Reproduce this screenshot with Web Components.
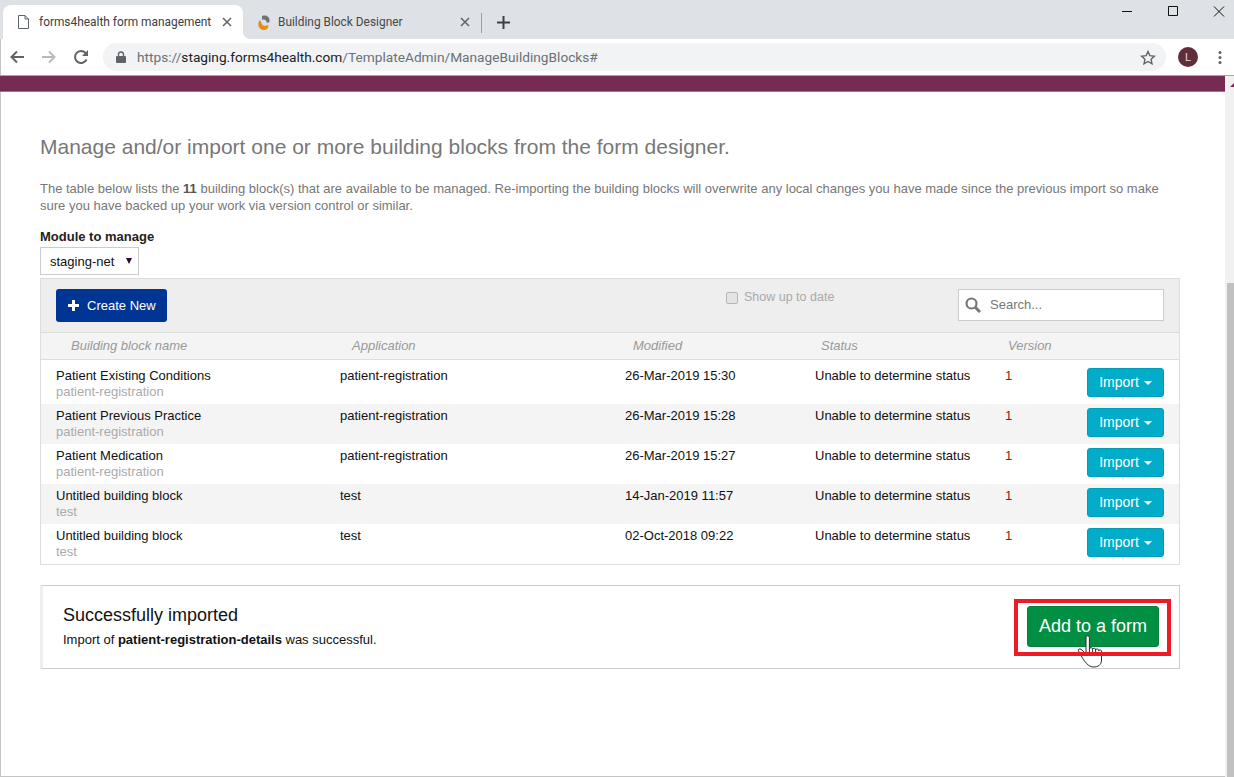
<!DOCTYPE html>
<html>
<head>
<meta charset="utf-8">
<title>forms4health form management</title>
<style>
    html, body { margin: 0; height: 100%; overflow: hidden; background: #fff; }
    body { font-family: "Liberation Sans", Arial, sans-serif; }
</style>
</head>
<body>
<browser-window>
    <manage-page></manage-page>
</browser-window>

<script>
class BrowserTabs extends HTMLElement {
    constructor() {
        super();
        this.attachShadow({ mode: 'open' }).innerHTML = /*html*/ `
            <style>
                :host { display: flex; height: 39px; background: #dee1e6; font: 11.900px "Roboto", "Liberation Sans", sans-serif; color: #3c4043; }
                .tab { height: 34px; margin-top: 5px; display: flex; align-items: center; box-sizing: border-box; flex: none; position: relative; }
                .tab svg { flex: none; }
                .active { width: 240px; margin-left: 3px; background: #fff; border-radius: 8px 8px 0 0; padding-left: 15px; }
                .active::after { content: ""; position: absolute; right: -8px; bottom: 0; width: 8px; height: 8px; background: radial-gradient(circle at 100% 0, transparent 8px, #fff 8.500px); }
                .other { width: 237px; padding-left: 14px; color: #45474b; }
                .name { margin-left: 10px; flex: 1; white-space: nowrap; }
                .other .name { margin-left: 8px; }
                .x { width: 10px; height: 10px; margin-right: 11px; }
                .other .x { margin-right: 10px; }
                .sep { width: 1px; height: 20px; background: #9aa0a6; margin-top: 13px; margin-left: 1px; flex: none; }
                .plus { width: 13px; height: 13px; margin: 16px 0 0 15px; flex: none; }
                .win { margin-left: auto; margin-right: -8px; display: flex; align-items: flex-start; }
                .win svg { width: 46px; height: 22px; display: block; }
            </style>
            <div class="tab active">
                <svg width="11" height="14" viewBox="0 0 11 14" fill="none" stroke="#5f6368"><path d="M.5.5h6.500l3.500 3.500v9.500h-10zM7 .5v3.500h3.500"/></svg>
                <span class="name">forms4health form management</span>
                <svg class="x" viewBox="0 0 10 10" stroke="#5f6368" stroke-width="1.500"><path d="M1 1l8 8M9 1l-8 8"/></svg>
            </div>
            <div class="tab other">
                <svg width="13" height="15" viewBox="0 0 13 15"><path d="M5 1C9-.5 13 2 12.500 6c-.3 2-2.500 2.500-3 1C9.500 5 7 4 5 5z" fill="#6f747a"/><path d="M3 5C0 8 1 14 6 15c4 .5 6-3 5-5-2 1.500-6 1-6.500-2z" fill="#e0900f"/></svg>
                <span class="name">Building Block Designer</span>
                <svg class="x" viewBox="0 0 10 10" stroke="#5f6368" stroke-width="1.500"><path d="M1 1l8 8M9 1l-8 8"/></svg>
            </div>
            <div class="sep"></div>
            <svg class="plus" viewBox="0 0 13 13" stroke="#3c4043" stroke-width="2"><path d="M6.500 0v13M0 6.500h13"/></svg>
            <div class="win">
                <svg viewBox="0 0 46 22" stroke="#111" fill="none"><path d="M18 11.500h10"/></svg>
                <svg viewBox="0 0 46 22" stroke="#111" fill="none"><path d="M18.500 6.500h9v9h-9z"/></svg>
                <svg viewBox="0 0 46 22" stroke="#111" fill="none"><path d="M18 6.500l10 10M28 6.500l-10 10"/></svg>
            </div>
        `;
    }
}

class BrowserToolbar extends HTMLElement {
    constructor() {
        super();
        this.attachShadow({ mode: 'open' }).innerHTML = /*html*/ `
            <style>
                :host { display: flex; align-items: center; height: 37px; box-sizing: border-box; background: #fff; border-bottom: 1px solid #a9a5a8; padding: 4px 0 4px 9px; box-shadow: inset 1px 0 #c4c4c4; }
                .nav { width: 16px; height: 16px; margin-right: 16px; flex: none; }
                .omni { flex: none; width: 1063px; height: 28px; border-radius: 14px; background: #f1f3f4; display: flex; align-items: center; box-sizing: border-box; padding: 0 10px 0 13px; font: 13.700px "Roboto", "Liberation Sans", sans-serif; color: #6b7177; }
                .omni b { font-weight: 400; color: #202124; }
                .url { margin-left: 11px; white-space: nowrap; flex: 1; }
                .avatar { width: 20px; height: 20px; margin-left: 12px; border-radius: 50%; background: #5f2d3b; color: #e8d9dd; font: 11px/20px "Liberation Sans", sans-serif; text-align: center; flex: none; }
                .dots { width: 4px; margin-left: 20px; flex: none; }
            </style>
            <svg class="nav" viewBox="0 0 16 16" fill="none" stroke="#5f6368" stroke-width="2"><path d="M15 8H3M8 2.500L2.500 8 8 13.500"/></svg>
            <svg class="nav" viewBox="0 0 16 16" fill="none" stroke="#bdb8bc" stroke-width="2"><path d="M1 8h12M8 2.500L13.500 8 8 13.500"/></svg>
            <svg class="nav" style="margin-right:14px" viewBox="0 0 16 16" fill="none" stroke="#5f6368" stroke-width="2"><path d="M13.500 10.500A6 6 0 1 1 12.500 4"/><path d="M15 1v6H9z" fill="#5f6368" stroke="none"/></svg>
            <div class="omni">
                <svg width="10" height="12" viewBox="0 0 10 12" fill="#5f6368" style="flex:none"><path d="M1 5h8a1 1 0 0 1 1 1v5a1 1 0 0 1-1 1H1a1 1 0 0 1-1-1V6a1 1 0 0 1 1-1z"/><path d="M2.500 5V3.500a2.500 2.500 0 0 1 5 0V5" fill="none" stroke="#5f6368" stroke-width="1.300"/></svg>
                <span class="url">https://<b>staging.forms4health.com</b>/TemplateAdmin/ManageBuildingBlocks#</span>
                <svg width="16" height="15" viewBox="0 0 16 15" fill="none" stroke="#5f6368" stroke-width="1.400" style="flex:none"><path d="M8 1.500l1.900 4.200 4.600.5-3.400 3.100.9 4.500-4-2.300-4 2.300.9-4.500L1.500 6.200l4.600-.5z"/></svg>
            </div>
            <div class="avatar">L</div>
            <svg class="dots" height="13" viewBox="0 0 4 13" fill="#5f6368"><circle cx="2" cy="1.500" r="1.500"/><circle cx="2" cy="6.500" r="1.500"/><circle cx="2" cy="11.500" r="1.500"/></svg>
        `;
    }
}

class BrowserWindow extends HTMLElement {
    constructor() {
        super();
        this.attachShadow({ mode: 'open' }).innerHTML = /*html*/ `
            <style>
                :host { display: flex; flex-direction: column; height: 777px; width: 1234px; overflow: hidden; }
                .view { flex: 1; display: flex; min-height: 0; box-shadow: inset 1px 0 #c4c4c4, inset 0 -1px #c4c4c4; }
                .page { flex: 1; min-width: 0; }
                .bar { width: 9px; background: #f1f1f1; display: flex; flex-direction: column; overflow: hidden; }
                .arrow { height: 17px; padding: 7px 0 0 5px; box-sizing: border-box; }
                .arrow svg { display: block; }
                .gap { height: 190px; }
                .thumb { flex: 1; background: #c1c1c1; margin-left: 2px; }
            </style>
            <browser-tabs></browser-tabs>
            <browser-toolbar></browser-toolbar>
            <div class="view">
                <div class="page"><slot></slot></div>
                <div class="bar">
                    <div class="arrow"><svg width="8" height="4" viewBox="0 0 8 4" fill="#772a52"><path d="M4 0l4 4H0z"/></svg></div>
                    <div class="gap"></div>
                    <div class="thumb"></div>
                </div>
            </div>
        `;
    }
}

class BlockRow extends HTMLElement {
    constructor() {
        super();
        const name = this.getAttribute('name');
        const app = this.getAttribute('app');
        const modified = this.getAttribute('modified');
        this.attachShadow({ mode: 'open' }).innerHTML = /*html*/ `
            <style>
                :host { display: grid; grid-template-columns: 284px 285px 190px 190px 82px 77px; height: 40px; box-sizing: border-box; padding: 4px 15px 0; font-size: 13px; line-height: 16px; color: #111; }
                :host(:nth-child(even)) { background: #f4f4f4; }
                .cell { white-space: nowrap; }
                .sub { color: #aaa; }
                .ver { color: #8b1a1a; }
                .btn { height: 29px; box-sizing: border-box; background: #00acc8; border: 1px solid #009db8; border-radius: 3px; color: #fff; font-size: 14px; line-height: 27px; text-align: center; white-space: nowrap; }
                .caret { display: inline-block; border: 4px solid transparent; border-top-color: #fff; border-bottom: 0; vertical-align: middle; margin-left: 1px; }
            </style>
            <div class="cell">${name}<div class="sub">${app}</div></div>
            <div class="cell">${app}</div>
            <div class="cell">${modified}</div>
            <div class="cell">Unable to determine status</div>
            <div class="cell ver">1</div>
            <div class="btn">Import <span class="caret"></span></div>
        `;
    }
}

class BlockTable extends HTMLElement {
    constructor() {
        super();
        this.attachShadow({ mode: 'open' }).innerHTML = /*html*/ `
            <style>
                :host { display: block; border: 1px solid #ddd; font-size: 13px; }
                .tools { height: 54px; background: #eee; display: flex; align-items: flex-start; box-sizing: border-box; padding: 10px 15px 0; border-bottom: 1px solid #ddd; }
                .create { width: 111px; height: 33px; box-sizing: border-box; background: #003594; border-radius: 3px; color: #fff; font-size: 13px; display: flex; align-items: center; padding-left: 12px; gap: 8px; white-space: nowrap; }
                .check { margin-left: 559px; margin-top: 1px; display: flex; align-items: center; color: #aaa; font-size: 12.500px; white-space: nowrap; }
                .box { width: 10px; height: 10px; border: 1px solid #b5b5b5; border-radius: 2px; background: #e4e4e4; margin-right: 6px; margin-top: 2px; }
                .search { margin-left: auto; width: 206px; height: 32px; box-sizing: border-box; background: #fff; border: 1px solid #ccc; display: flex; align-items: center; padding: 0 0 2px 6px; gap: 9px; color: #777; font-size: 13px; }
                .search svg { margin-top: 2px; }
                .head { height: 27px; box-sizing: border-box; display: grid; grid-template-columns: 281px 281px 188px 187px 1fr; padding: 0 0 2px 30px; align-items: center; background: #f4f4f4; border-bottom: 1px solid #ddd; color: #999; font-style: italic; }
                .rows { padding-top: 4px; }
            </style>
            <div class="tools">
                <div class="create">
                    <svg width="11" height="11" viewBox="0 0 11 11" fill="#fff"><path d="M4 0h3v4h4v3H7v4H4V7H0V4h4z"/></svg>
                    Create New
                </div>
                <div class="check"><span class="box"></span>Show up to date</div>
                <div class="search">
                    <svg width="16" height="16" viewBox="0 0 16 16" fill="none" stroke="#777" stroke-width="2.200"><circle cx="6.500" cy="6.500" r="5"/><path d="M10 10l5 5" stroke-width="3"/></svg>
                    Search...
                </div>
            </div>
            <div class="head">
                <span>Building block name</span><span>Application</span><span>Modified</span><span>Status</span><span>Version</span>
            </div>
            <div class="rows"><slot></slot></div>
        `;
    }
}

class ImportNotice extends HTMLElement {
    constructor() {
        super();
        this.attachShadow({ mode: 'open' }).innerHTML = /*html*/ `
            <style>
                :host { display: flex; height: 84px; box-sizing: border-box; border: 1px solid #ccc; border-left: 3px solid #eee; margin-top: 20px; align-items: flex-start; }
                .msg { margin-left: 20px; margin-top: 18px; color: #111; }
                h3 { margin: 0; font-size: 18px; font-weight: 400; line-height: 22px; }
                p { margin: 6px 0 0; font-size: 13px; line-height: 16px; }
                .frame { margin-left: auto; margin-right: 8px; margin-top: 13px; width: 157px; height: 57px; box-sizing: border-box; padding: 7px 0 0 13px; position: relative; }
                /* red marker sits over the hand, like in the annotated shot */
                .frame::after { content: ""; position: absolute; inset: 0; border: 4px solid #ed1c24; }
                .go { width: 132px; height: 41px; background: #008f43; border: 1px solid #0a7d3e; border-radius: 3px; box-sizing: border-box; color: #fff; font-size: 18px; line-height: 38px; text-align: center; white-space: nowrap; }
                .hand { position: absolute; left: 62px; top: 35px; }
            </style>
            <div class="msg">
                <h3>Successfully imported</h3>
                <p>Import of <b>patient-registration-details</b> was successful.</p>
            </div>
            <div class="frame">
                <div class="go">Add to a form</div>
                <svg class="hand" width="28" height="36" viewBox="0 0 28 36" fill="#fff" stroke="#2a2a2a"><path d="M10 3.500a1.700 1.700 0 0 1 3.400 0V15a1.600 1.600 0 0 1 3.200 .5 1.500 1.500 0 0 1 3 .5 1.500 1.500 0 0 1 3 1 1.500 1.500 0 0 1 3 1L25.500 26c0 5-3.500 7-8 7-5 0-9-5-13-12.500L2.500 17c-1-2 1.500-3 3.500-1l4 4z"/><path d="M13.400 15v5M16.600 15.500v5M19.600 16v5" fill="none"/></svg>
            </div>
        `;
    }
}

class ManagePage extends HTMLElement {
    constructor() {
        super();
        this.attachShadow({ mode: 'open' }).innerHTML = /*html*/ `
            <style>
                :host { display: block; color: #777; font-size: 13px; }
                .band { height: 15px; background: #772a52; border-bottom: 1px solid #8f7a85; }
                .wrap { width: 1140px; margin-left: 40px; }
                h2 { margin: 0; padding-top: 41px; font-size: 21px; line-height: 28px; font-weight: 400; color: #777; }
                p { margin: 19px 0 0; line-height: 17px; max-width: 1125px; }
                p b { color: #555; }
                label { display: block; margin-top: 15px; font-weight: 700; color: #222; line-height: 16px; font-size: 13px; }
                .select { margin-top: 2px; width: 99px; height: 28px; box-sizing: border-box; border: 1px solid #ccc; color: #111; display: flex; align-items: center; padding: 0 6px 0 9px; justify-content: space-between; margin-bottom: 3px; }
                .select i { width: 0; height: 0; border: 3px solid transparent; border-top: 6px solid #2a0a2a; border-bottom: 0; }
            </style>
            <div class="band"></div>
            <div class="wrap">
                <h2>Manage and/or import one or more building blocks from the form designer.</h2>
                <p>The table below lists the <b>11</b> building block(s) that are available to be managed. Re-importing the building blocks will overwrite any local changes you have made since the previous import so make sure you have backed up your work via version control or similar.</p>
                <label>Module to manage</label>
                <div class="select">staging-net <i></i></div>
                <block-table>
                    <block-row name="Patient Existing Conditions" app="patient-registration" modified="26-Mar-2019 15:30"></block-row>
                    <block-row name="Patient Previous Practice" app="patient-registration" modified="26-Mar-2019 15:28"></block-row>
                    <block-row name="Patient Medication" app="patient-registration" modified="26-Mar-2019 15:27"></block-row>
                    <block-row name="Untitled building block" app="test" modified="14-Jan-2019 11:57"></block-row>
                    <block-row name="Untitled building block" app="test" modified="02-Oct-2018 09:22"></block-row>
                </block-table>
                <import-notice></import-notice>
            </div>
        `;
    }
}

customElements.define('browser-tabs', BrowserTabs);
customElements.define('browser-toolbar', BrowserToolbar);
customElements.define('browser-window', BrowserWindow);
customElements.define('block-row', BlockRow);
customElements.define('block-table', BlockTable);
customElements.define('import-notice', ImportNotice);
customElements.define('manage-page', ManagePage);
</script>
</body>
</html>
